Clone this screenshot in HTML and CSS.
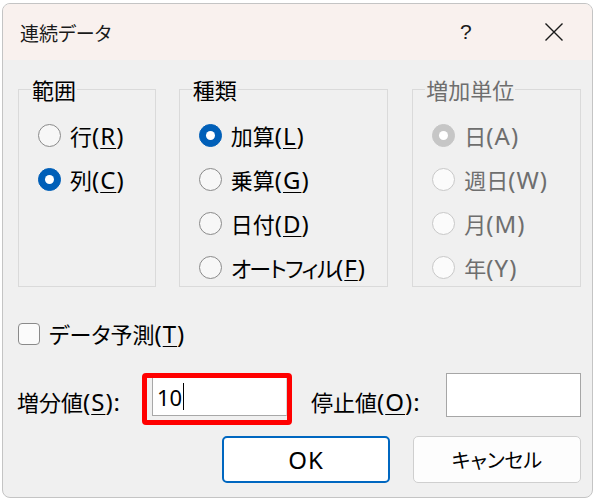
FILE: index.html
```html
<!DOCTYPE html>
<html lang="ja">
<head>
<meta charset="utf-8">
<title>連続データ</title>
<link rel="stylesheet" href="styles.css">
</head>
<body>
<div class="window">
  <div class="titlebar">
    <span class="title">連続データ</span>
    <span class="help">?</span>
    <span class="close">
      <svg width="20" height="20" viewBox="0 0 20 20"><path d="M1.5 1.5 L18.5 18.5 M18.5 1.5 L1.5 18.5" stroke="#1a1a1a" stroke-width="1.4" fill="none"/></svg>
    </span>
  </div>
  <div class="content">
    <div class="groups">
      <fieldset class="group g1">
        <legend>範囲</legend>
        <div class="opt"><span class="radio"></span><span>行<span class="l">(<u>R</u>)</span></span></div>
        <div class="opt"><span class="radio on"></span><span>列<span class="l">(<u>C</u>)</span></span></div>
      </fieldset>
      <fieldset class="group g2">
        <legend>種類</legend>
        <div class="opt"><span class="radio on"></span><span>加算<span class="l">(<u>L</u>)</span></span></div>
        <div class="opt"><span class="radio"></span><span>乗算<span class="l">(<u>G</u>)</span></span></div>
        <div class="opt"><span class="radio"></span><span>日付<span class="l">(<u>D</u>)</span></span></div>
        <div class="opt"><span class="radio"></span><span><span class="kana">オートフィル</span><span class="l">(<u>F</u>)</span></span></div>
      </fieldset>
      <fieldset class="group g3 disabled">
        <legend>増加単位</legend>
        <div class="opt"><span class="radio on"></span><span>日<span class="l">(A)</span></span></div>
        <div class="opt"><span class="radio"></span><span>週日<span class="l">(W)</span></span></div>
        <div class="opt"><span class="radio"></span><span>月<span class="l">(M)</span></span></div>
        <div class="opt"><span class="radio"></span><span>年<span class="l">(Y)</span></span></div>
      </fieldset>
    </div>
    <div class="check-row">
      <span class="checkbox"></span><span>データ予測<span class="l">(<u>T</u>)</span></span>
    </div>
    <div class="value-row">
      <span class="label1">増分値<span class="l">(<u>S</u>):</span></span>
      <div class="highlight">
        <div class="field first"><span>10</span><span class="caret"></span></div>
      </div>
      <span class="label2">停止値<span class="l">(<u>O</u>):</span></span>
      <div class="field stop"></div>
    </div>
    <div class="buttons">
      <div class="btn ok"><span class="l">OK</span></div>
      <div class="btn">キャンセル</div>
    </div>
  </div>
</div>
</body>
</html>
```
FILE: styles.css
```css
html, body {
  margin: 0;
  background: #ffffff;
}
body {
  padding: 3px 0 0 2px;
  font-family: "Noto Sans CJK JP", "Noto Sans", sans-serif;
  font-size: 22px;
  color: #000000;
}
.l {
  font-family: "Noto Sans", "Noto Sans CJK JP", sans-serif;
  font-size: 24px;
  letter-spacing: 1px;
}
.kana {
  letter-spacing: -1.5px;
}
.window {
  width: 591px;
  height: 495px;
  box-sizing: border-box;
  border: 1px solid #c4c4c4;
  border-radius: 8px;
  overflow: hidden;
  background: #f0f0f0;
  display: flex;
  flex-direction: column;
}
.titlebar {
  height: 56px;
  flex: none;
  background: #f9f1ee;
  display: flex;
  align-items: center;
  padding-left: 17px;
}
.title {
  flex: 1;
  font-size: 19px;
  font-feature-settings: "palt";
  margin-top: 1px;
  color: #1a1a1a;
}
.help {
  font-family: "Liberation Sans", sans-serif;
  font-size: 21px;
  width: 12px;
  margin-right: 72px;
  color: #1a1a1a;
}
.close {
  display: flex;
  margin-right: 28px;
}
.content {
  padding: 17px 11px 0 14px;
  display: flex;
  flex-direction: column;
}
.groups {
  display: flex;
  padding-left: 1px;
}
.group {
  margin: 0;
  padding: 12px 0 0 19px;
  border: 1px solid #dadada;
  height: 210px;
  box-sizing: border-box;
  min-inline-size: 0;
}
.group legend {
  font-size: 22px;
  line-height: 24px;
  padding: 0 1px;
  margin-left: -7px;
}
.g1 { width: 138px; }
.g2 { width: 210px; margin-left: 23px; }
.g3 { width: 169px; margin-left: 24px; }
.opt {
  height: 44px;
  display: flex;
  align-items: center;
  gap: 9px;
  font-feature-settings: "palt";
  white-space: nowrap;
}
.radio {
  width: 21px;
  height: 21px;
  border: 1px solid #8a8a8a;
  border-radius: 50%;
  background: #f7f7f7;
  display: flex;
  align-items: center;
  justify-content: center;
  flex: none;
}
.radio.on {
  background: #005fb8;
  border-color: #005fb8;
}
.radio.on::after {
  content: "";
  width: 9px;
  height: 9px;
  border-radius: 50%;
  background: #ffffff;
}
.disabled {
  color: #6e6e6e;
}
.disabled .radio {
  border-color: #c8c8c8;
  background: #fbfbfb;
}
.disabled .radio.on {
  background: #c6c6c6;
  border-color: #c6c6c6;
}
u {
  text-decoration-thickness: 1px;
  text-underline-offset: 3px;
}
.check-row {
  margin-top: 30px;
  display: flex;
  align-items: center;
  gap: 9px;
  font-feature-settings: "palt";
}
.checkbox {
  width: 22px;
  height: 22px;
  box-sizing: border-box;
  border: 1px solid #8a8a8a;
  border-radius: 4px;
  background: #fbfbfb;
  margin-left: 1px;
}
.value-row {
  margin-top: 23px;
  display: flex;
  align-items: center;
  font-feature-settings: "palt";
}
.label1 {
  width: 125px;
  flex: none;
  margin-top: 4px;
  white-space: nowrap;
}
.highlight {
  width: 150px;
  height: 52px;
  box-sizing: border-box;
  border: 5px solid #ff0000;
  border-radius: 4px;
  padding: 0 0 4px 5px;
  display: flex;
}
.field {
  background: #ffffff;
  box-sizing: border-box;
  display: flex;
  align-items: center;
  font-family: "Noto Sans", sans-serif;
  font-size: 22px;
  color: #000;
}
.field.first {
  width: 135px;
  border-left: 1px solid #a8a8a8;
  border-bottom: 1px solid #a8a8a8;
  border-right: 1px solid #d8d8d8;
  padding-left: 4px;
}
.caret {
  width: 1px;
  height: 27px;
  background: #000;
  margin-left: 1px;
}
.label2 {
  width: 135px;
  flex: none;
  margin-left: 19px;
  margin-top: 4px;
  white-space: nowrap;
}
.field.stop {
  width: 137px;
  height: 44px;
  border: 1px solid #a6a6a6;
  margin-top: -8px;
}
.buttons {
  margin-top: 11px;
  display: flex;
  justify-content: flex-end;
  gap: 23px;
}
.btn {
  width: 168px;
  height: 47px;
  box-sizing: border-box;
  border: 1px solid #cfcfcf;
  border-radius: 5px;
  background: #fdfdfd;
  display: flex;
  align-items: center;
  justify-content: center;
  font-size: 20px;
  font-feature-settings: "palt";
}
.btn.ok {
  border: 2px solid #0067c0;
  background: #ffffff;
}
```
